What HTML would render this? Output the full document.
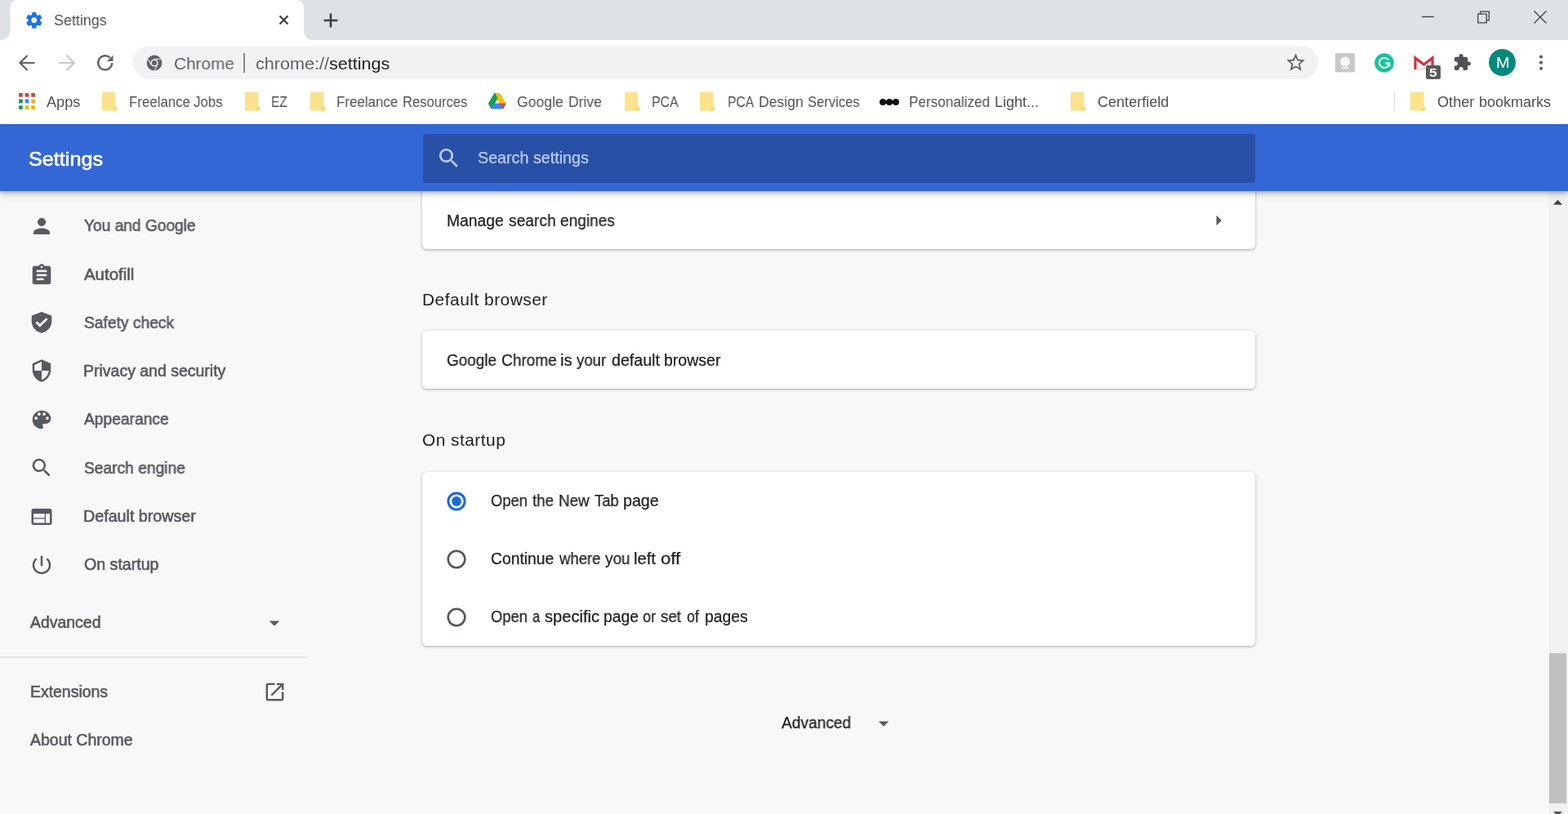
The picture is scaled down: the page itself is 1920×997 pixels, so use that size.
<!DOCTYPE html>
<html lang="en">
<head>
<meta charset="utf-8">
<title>Settings</title>
<style>
*{box-sizing:border-box;margin:0;padding:0}
html,body{width:1920px;height:997px;overflow:hidden;background:#f8f8f9}
body{font-family:"Liberation Sans",sans-serif;color:#202124;position:relative}
.abs,.t,.ic{position:absolute}
.t{white-space:nowrap;line-height:1;will-change:transform;transform-origin:0 0}
.ic{display:block;overflow:visible}
.card{background:#fff;border-radius:5.5px;box-shadow:0 1px 2.5px rgba(60,64,67,.24),0 1px 3.5px 1px rgba(60,64,67,.14)}
</style>
</head>
<body>
<!-- tab strip -->
<div class="abs" style="left:0px;top:0px;width:1920px;height:48.6px;background:#dee1e6"></div>
<svg class="ic" style="left:0px;top:0px;width:386px;height:49px" viewBox="0 0 386 49"><path d="M0 49 C7 49 12.500 44.500 12.500 37 V9 C12.500 3.500 16 0 21.500 0 H363 C368.500 0 372 3.500 372 9 V37 C372 44.500 376.500 49 384 49 Z" fill="#fff"/></svg>
<svg class="ic" style="left:29.90px;top:12.90px;width:23.6px;height:23.6px" viewBox="0 0 24 24"><path fill="#1a73e8" fill-rule="evenodd" d="M19.43 12.98c.04-.32.07-.64.07-.98s-.03-.66-.07-.98l2.11-1.65c.19-.15.24-.42.12-.64l-2-3.46c-.12-.22-.39-.3-.61-.22l-2.49 1c-.52-.4-1.08-.73-1.69-.98l-.38-2.65C14.46 2.18 14.25 2 14 2h-4c-.25 0-.46.18-.49.42l-.38 2.65c-.61.25-1.17.59-1.69.98l-2.49-1c-.23-.09-.49 0-.61.22l-2 3.46c-.13.22-.07.49.12.64l2.11 1.65c-.04.32-.07.65-.07.98s.03.66.07.98l-2.11 1.65c-.19.15-.24.42-.12.64l2 3.46c.12.22.39.3.61.22l2.49-1c.52.4 1.08.73 1.69.98l.38 2.65c.03.24.24.42.49.42h4c.25 0 .46-.18.49-.42l.38-2.65c.61-.25 1.17-.59 1.69-.98l2.49 1c.23.09.49 0 .61-.22l2-3.46c.12-.22.07-.49-.12-.64l-2.11-1.65zM12 15.5c-1.93 0-3.5-1.57-3.5-3.5s1.57-3.5 3.5-3.5 3.5 1.57 3.5 3.5-1.57 3.5-3.5 3.5z"/></svg>
<div class="t" style="left:65.55px;top:16px;font-size:18.4px;color:#4d5054;transform:scaleX(0.9734)">Settings</div>
<svg class="ic" style="left:341px;top:18px;width:13px;height:13px" viewBox="0 0 13 13"><path d="M1.500 1.500 L11.500 11.500 M11.500 1.500 L1.500 11.500" stroke="#3c4043" stroke-width="2.200" fill="none"/></svg>
<svg class="ic" style="left:395px;top:15px;width:20px;height:20px" viewBox="0 0 20 20"><path d="M10 1.500 V18.500 M1.500 10 H18.500" stroke="#3c4043" stroke-width="2.600" fill="none"/></svg>
<svg class="ic" style="left:1738px;top:10px;width:22px;height:22px" viewBox="0 0 22 22"><path d="M3 10.500 H18" stroke="#3c4043" stroke-width="1.300" fill="none"/></svg>
<svg class="ic" style="left:1806px;top:10px;width:22px;height:22px" viewBox="0 0 22 22"><path d="M3.700 7.200 H14.300 V17.800 H3.700 Z M6.700 7.200 V4.200 H17.300 V14.800 H14.300" stroke="#3c4043" stroke-width="1.250" fill="none"/></svg>
<svg class="ic" style="left:1874.5px;top:10px;width:22px;height:22px" viewBox="0 0 22 22"><path d="M3.500 3.500 L18.500 18.500 M18.500 3.500 L3.500 18.500" stroke="#3c4043" stroke-width="1.300" fill="none"/></svg>
<!-- toolbar -->
<div class="abs" style="left:0px;top:49px;width:1920px;height:103px;background:#fff"></div>
<svg class="ic" style="left:22.4px;top:64.5px;width:24px;height:24px" viewBox="0 0 24 24"><path d="M20.500 12 H3.500 M11.500 3 L2.500 12 L11.500 21" stroke="#5f6368" stroke-width="2.200" fill="none"/></svg>
<svg class="ic" style="left:69px;top:65px;width:24px;height:24px" viewBox="0 0 24 24"><path d="M3.500 12 H20.500 M12.500 2.800 L21.500 12 L12.500 21.200" stroke="#c4c7ca" stroke-width="2.200" fill="none"/></svg>
<svg class="ic" style="left:117px;top:65px;width:24px;height:24px" viewBox="0 0 24 24"><path d="M20.300 12 A8.600 8.600 0 1 1 17.600 5.600" stroke="#5f6368" stroke-width="2.300" fill="none"/><path d="M21.500 2.600 V10 H14.100 Z" fill="#5f6368"/></svg>
<div class="abs" style="left:163px;top:56px;width:1450.5px;height:41px;border-radius:21px;background:#f1f2f3"></div>
<svg class="ic" style="left:179px;top:67px;width:20px;height:20px" viewBox="0 0 20 20"><circle cx="10" cy="10" r="9.400" fill="#5f6368"/><circle cx="10" cy="10" r="4.600" fill="#f1f2f3"/><circle cx="10" cy="10" r="3.100" fill="#5f6368"/><path d="M10 5.400 H18.300 M6 12.300 L1.900 5.200 M14 12.300 L9.900 19.400" stroke="#f1f2f3" stroke-width="1.100" fill="none" opacity=".85"/></svg>
<div class="t" style="left:213.01px;top:67px;font-size:21px;color:#5f6368;transform:scaleX(0.9904)">Chrome</div>
<div class="abs" style="left:298.3px;top:64.5px;width:1.4px;height:24px;background:#85898e"></div>
<div class="t" style="left:313.04px;top:67px;font-size:21px;color:#5f6368;transform:scaleX(1.0282)">chrome://<span style="color:#202124">settings</span></div>
<svg class="ic" style="left:1573.40px;top:63.00px;width:27.2px;height:27.2px" viewBox="0 0 24 24"><path fill="#5f6368" fill-rule="evenodd" d="M22 9.24l-7.19-.62L12 2 9.19 8.63 2 9.24l5.46 4.73L5.82 21 12 17.27 18.18 21l-1.63-7.03L22 9.24zM12 15.4l-3.76 2.27 1-4.28-3.32-2.88 4.38-.38L12 6.1l1.71 4.04 4.38.38-3.32 2.88 1 4.28L12 15.4z"/></svg>
<!-- extensions -->
<svg class="ic" style="left:1635px;top:65px;width:24px;height:24px" viewBox="0 0 24 24"><rect width="24" height="23.500" rx="1.500" fill="#c8c8c8"/><circle cx="12" cy="10.500" r="6" fill="#f7f7f7"/><rect x="7.500" y="17" width="9" height="2.400" rx="1" fill="#efefef"/></svg>
<svg class="ic" style="left:1683px;top:65px;width:24px;height:24px" viewBox="0 0 24 24"><circle cx="12" cy="12" r="11.800" fill="#15c39a"/><path d="M17.200 8.600 A6.100 6.100 0 1 0 18.100 12.600 H13" stroke="#fff" stroke-width="2.100" fill="none"/><path d="M15.600 15.200 L19.300 12.400 L19.300 16.900 Z" fill="#fff"/></svg>
<svg class="ic" style="left:1730.5px;top:68px;width:25px;height:18px" viewBox="0 0 25 18"><path d="M2 17.200 V3 L12.500 11 L23 3 V17.200" stroke="#d3303d" stroke-width="3.200" fill="none" stroke-linejoin="miter"/><path d="M3 16.500 H22" stroke="#e3b9bb" stroke-width="1.200"/></svg>
<div class="abs" style="left:1746px;top:80px;width:18px;height:17px;border-radius:2px;background:#5b5b5b"></div>
<div class="t" style="left:1750.21px;top:81px;font-size:15px;color:#fff;transform:scaleX(1.1616);font-weight:700">5</div>
<svg class="ic" style="left:1780px;top:65.1px;width:22px;height:22px" viewBox="1 0 23 23"><path fill="#4f5256" d="M20.5 11H19V7c0-1.1-.9-2-2-2h-4V3.5C13 2.12 11.88 1 10.5 1S8 2.12 8 3.5V5H4c-1.1 0-1.99.9-1.99 2v3.8H3.5c1.49 0 2.7 1.21 2.7 2.7s-1.21 2.7-2.7 2.7H2V20c0 1.1.9 2 2 2h3.8v-1.5c0-1.49 1.21-2.7 2.7-2.7 1.49 0 2.7 1.21 2.7 2.7V22H17c1.1 0 2-.9 2-2v-4h1.5c1.38 0 2.5-1.12 2.5-2.5S21.88 11 20.5 11z"/></svg>
<div class="abs" style="left:1823px;top:60px;width:33px;height:33px;border-radius:50%;background:#00897b"></div>
<div class="t" style="left:1831.66px;top:69px;font-size:17.5px;color:#fff;transform:scaleX(1.1366)">M</div>
<svg class="ic" style="left:1881px;top:65px;width:12px;height:24px" viewBox="0 0 12 24"><circle cx="6" cy="4.600" r="2.100" fill="#5f6368"/><circle cx="6" cy="11.700" r="2.100" fill="#5f6368"/><circle cx="6" cy="18.800" r="2.100" fill="#5f6368"/></svg>
<!-- bookmarks bar -->
<svg class="ic" style="left:23px;top:114px;width:20px;height:20px" viewBox="0 0 20 20"><rect x="0.0" y="0.0" width="4.800" height="4.800" rx=".800" fill="#db4437"/><rect x="7.6" y="0.0" width="4.800" height="4.800" rx=".800" fill="#db4437"/><rect x="15.2" y="0.0" width="4.800" height="4.800" rx=".800" fill="#db4437"/><rect x="0.0" y="7.6" width="4.800" height="4.800" rx=".800" fill="#0f9d58"/><rect x="7.6" y="7.6" width="4.800" height="4.800" rx=".800" fill="#4285f4"/><rect x="15.2" y="7.6" width="4.800" height="4.800" rx=".800" fill="#f4b400"/><rect x="0.0" y="15.2" width="4.800" height="4.800" rx=".800" fill="#0f9d58"/><rect x="7.6" y="15.2" width="4.800" height="4.800" rx=".800" fill="#f4b400"/><rect x="15.2" y="15.2" width="4.800" height="4.800" rx=".800" fill="#f4b400"/></svg>
<div class="t" style="left:56.70px;top:116px;font-size:18px;color:#4d5054;transform:scaleX(1.0081)">Apps</div>
<svg class="ic" style="left:124.5px;top:113.3px;width:18.2px;height:22.5px" viewBox="0 0 18.200 22.500"><path d="M0 0 H16.400 V17.500 H18.200 V22.500 H0 Z" fill="#fbe28b"/><path d="M14.200 18.500 H18.200 V22.500 H14.200 Z" fill="#f5d872"/></svg>
<div class="t" style="left:157.86px;top:116px;font-size:18px;color:#4d5054;transform:scaleX(0.9366)">Freelance </div><div class="t" style="left:237.31px;top:116px;font-size:18px;color:#4d5054;transform:scaleX(0.9360)">Jobs</div>
<svg class="ic" style="left:300px;top:113.3px;width:18.2px;height:22.5px" viewBox="0 0 18.200 22.500"><path d="M0 0 H16.400 V17.500 H18.200 V22.500 H0 Z" fill="#fbe28b"/><path d="M14.200 18.500 H18.200 V22.500 H14.200 Z" fill="#f5d872"/></svg>
<div class="t" style="left:332.44px;top:116px;font-size:18px;color:#4d5054;transform:scaleX(0.8586)">EZ</div>
<svg class="ic" style="left:380px;top:113.3px;width:18.2px;height:22.5px" viewBox="0 0 18.200 22.500"><path d="M0 0 H16.400 V17.500 H18.200 V22.500 H0 Z" fill="#fbe28b"/><path d="M14.200 18.500 H18.200 V22.500 H14.200 Z" fill="#f5d872"/></svg>
<div class="t" style="left:412.46px;top:116px;font-size:18px;color:#4d5054;transform:scaleX(0.9404)">Freelance </div><div class="t" style="left:493.18px;top:116px;font-size:18px;color:#4d5054;transform:scaleX(0.9220)">Resources</div>
<svg class="ic" style="left:597.3px;top:113.3px;width:23.4px;height:21.5px" viewBox="0 0 24 22"><g stroke-linejoin="round" stroke-width="1.600"><path d="M8.800 1.800 H15.200 L22.300 14 H15.900 Z" fill="#fbbc04" stroke="#fbbc04"/><path d="M8.800 1.800 L12 7.400 L4.900 19.800 L1.700 14.200 Z" fill="#1a9c55" stroke="#1a9c55"/><path d="M8.600 14.600 H22.200 L19.200 20.200 H5.400 Z" fill="#3f82f0" stroke="#3f82f0"/><path d="M19.200 20.200 L22.200 14.600 H16.200 Z" fill="#d9453a" stroke="#d9453a" stroke-width=".600"/></g></svg>
<div class="t" style="left:632.99px;top:116px;font-size:18px;color:#4d5054;transform:scaleX(0.9782)">Google </div><div class="t" style="left:696.03px;top:116px;font-size:18px;color:#4d5054;transform:scaleX(0.9712)">Drive</div>
<svg class="ic" style="left:764.5px;top:113.3px;width:18.2px;height:22.5px" viewBox="0 0 18.200 22.500"><path d="M0 0 H16.400 V17.500 H18.200 V22.500 H0 Z" fill="#fbe28b"/><path d="M14.200 18.500 H18.200 V22.500 H14.200 Z" fill="#f5d872"/></svg>
<div class="t" style="left:798.12px;top:116px;font-size:18px;color:#4d5054;transform:scaleX(0.8806)">PCA</div>
<svg class="ic" style="left:857.3px;top:113.3px;width:18.2px;height:22.5px" viewBox="0 0 18.200 22.500"><path d="M0 0 H16.400 V17.500 H18.200 V22.500 H0 Z" fill="#fbe28b"/><path d="M14.200 18.500 H18.200 V22.500 H14.200 Z" fill="#f5d872"/></svg>
<div class="t" style="left:891.33px;top:116px;font-size:18px;color:#4d5054;transform:scaleX(0.8694)">PCA </div><div class="t" style="left:929.12px;top:116px;font-size:18px;color:#4d5054;transform:scaleX(0.9759)">Design </div><div class="t" style="left:988.81px;top:116px;font-size:18px;color:#4d5054;transform:scaleX(0.9212)">Services</div>
<svg class="ic" style="left:1076.3px;top:119.6px;width:26px;height:10px" viewBox="0 0 26 10"><circle cx="5" cy="5" r="4" fill="#111"/><circle cx="13" cy="5" r="4" fill="#111"/><circle cx="21" cy="5" r="4" fill="#111"/><rect x="5" y="3" width="16" height="4" fill="#111"/></svg>
<div class="t" style="left:1113.25px;top:116px;font-size:18px;color:#4d5054;transform:scaleX(0.9529)">Personalized </div><div class="t" style="left:1217.60px;top:116px;font-size:18px;color:#4d5054;transform:scaleX(0.9990)">Light...</div>
<svg class="ic" style="left:1310.7px;top:113.3px;width:18.2px;height:22.5px" viewBox="0 0 18.200 22.500"><path d="M0 0 H16.400 V17.500 H18.200 V22.500 H0 Z" fill="#fbe28b"/><path d="M14.200 18.500 H18.200 V22.500 H14.200 Z" fill="#f5d872"/></svg>
<div class="t" style="left:1344.05px;top:116px;font-size:18px;color:#4d5054;transform:scaleX(1.0029)">Centerfield</div>
<div class="abs" style="left:1707px;top:112px;width:1px;height:24px;background:#dadce0"></div>
<svg class="ic" style="left:1726.7px;top:113.3px;width:18.2px;height:22.5px" viewBox="0 0 18.200 22.500"><path d="M0 0 H16.400 V17.500 H18.200 V22.500 H0 Z" fill="#fbe28b"/><path d="M14.200 18.500 H18.200 V22.500 H14.200 Z" fill="#f5d872"/></svg>
<div class="t" style="left:1759.61px;top:116px;font-size:18px;color:#4d5054;transform:scaleX(1.0065)">Other </div><div class="t" style="left:1810.70px;top:116px;font-size:18px;color:#4d5054;transform:scaleX(0.9968)">bookmarks</div>
<!-- settings page -->
<div class="abs card" style="left:517px;top:225px;width:1020px;height:80px"></div>
<div class="abs card" style="left:517px;top:405px;width:1020px;height:71.300px"></div>
<div class="abs card" style="left:517px;top:577.600px;width:1020px;height:213.300px"></div>
<div class="abs" style="left:1896px;top:235px;width:24px;height:762px;background:#f1f1f1"></div>
<div class="abs" style="left:1897px;top:800px;width:21px;height:184px;background:#c1c1c1"></div>
<svg class="ic" style="left:1895.6px;top:236.4px;width:23px;height:23px" viewBox="0 0 23 23"><path d="M6 14.700 L11.500 8.700 L17 14.700 Z" fill="#404040"/></svg>
<svg class="ic" style="left:1895.6px;top:984.8px;width:23px;height:23px" viewBox="0 0 23 23"><path d="M6 9 L11.500 15 L17 9 Z" fill="#555"/></svg>
<div class="abs" style="left:0px;top:152px;width:1920px;height:82.2px;background:#3367d6;box-shadow:0 2px 5px rgba(0,0,0,.28),0 5px 9px rgba(0,0,0,.10)"></div>
<div class="abs" style="left:517.5px;top:164px;width:1019px;height:59.5px;border-radius:3px;background:#2850a7"></div>
<div class="t" style="left:35.45px;top:183px;font-size:24px;color:#fff;transform:scaleX(1.0492);-webkit-text-stroke:0.6px #fff">Settings</div>
<svg class="ic" style="left:533.95px;top:178.05px;width:31.5px;height:31.5px" viewBox="0 0 24 24"><path fill="#bccdf6" fill-rule="evenodd" d="M15.5 14h-.79l-.28-.27C15.41 12.59 16 11.11 16 9.5 16 5.91 13.09 3 9.5 3S3 5.91 3 9.5 5.91 16 9.5 16c1.61 0 3.09-.59 4.23-1.57l.27.28v.79l5 4.99L20.49 19l-4.99-5zm-6 0C7.01 14 5 11.99 5 9.5S7.01 5 9.5 5 14 7.01 14 9.5 11.99 14 9.5 14z"/></svg>
<div class="t" style="left:584.77px;top:184px;font-size:19.3px;color:#bccdf6;transform:scaleX(1.0219);-webkit-text-stroke:0.25px #bccdf6">Search settings</div>
<svg class="ic" style="left:35.90px;top:262.00px;width:30px;height:30px" viewBox="0 0 24 24"><path fill="#575a5f" fill-rule="evenodd" d="M12 12c2.21 0 4-1.79 4-4s-1.79-4-4-4-4 1.79-4 4 1.79 4 4 4zm0 2c-2.67 0-8 1.34-8 4v2h16v-2c0-2.66-5.33-4-8-4z"/></svg><div class="t" style="left:103.20px;top:267px;font-size:19.3px;color:#575a5f;transform:scaleX(0.9927);-webkit-text-stroke:0.6px #575a5f">You and Google</div>
<svg class="ic" style="left:35.90px;top:321.60px;width:30px;height:30px" viewBox="0 0 24 24"><path fill="#575a5f" fill-rule="evenodd" d="M19 3h-4.18C14.4 1.84 13.3 1 12 1c-1.3 0-2.4.84-2.82 2H5c-1.1 0-2 .9-2 2v14c0 1.1.9 2 2 2h14c1.1 0 2-.9 2-2V5c0-1.1-.9-2-2-2zm-7 0c.55 0 1 .45 1 1s-.45 1-1 1-1-.45-1-1 .45-1 1-1zm2 14H7v-2h7v2zm3-4H7v-2h10v2zm0-4H7V7h10v2z"/></svg><div class="t" style="left:103.32px;top:327px;font-size:19.3px;color:#575a5f;transform:scaleX(1.0592);-webkit-text-stroke:0.6px #575a5f">Autofill</div>
<svg class="ic" style="left:35.90px;top:380.20px;width:30px;height:30px" viewBox="0 0 24 24"><path fill="#575a5f" fill-rule="evenodd" d="M12 1.500 L21.800 5.300 V11 C21.800 16.400 17.800 21 12 22.300 C6.200 21 2.200 16.400 2.200 11 V5.300 Z M10.300 16.600 L6 12.300 L7.600 10.700 L10.300 13.400 L16.400 7.300 L18 8.900 Z"/></svg><div class="t" style="left:102.50px;top:386px;font-size:19.3px;color:#575a5f;transform:scaleX(0.9964);-webkit-text-stroke:0.6px #575a5f">Safety check</div>
<svg class="ic" style="left:35.90px;top:439.20px;width:30px;height:30px" viewBox="0 0 24 24"><path fill="#575a5f" fill-rule="evenodd" d="M12 1L3 5v6c0 5.55 3.84 10.74 9 12 5.16-1.26 9-6.45 9-12V5l-9-4zm0 10.99h7c-.53 4.12-3.28 7.79-7 8.94V12H5V6.3l7-3.11v8.8z"/></svg><div class="t" style="left:102.19px;top:445px;font-size:19.3px;color:#575a5f;transform:scaleX(1.0105);-webkit-text-stroke:0.6px #575a5f">Privacy and security</div>
<svg class="ic" style="left:35.90px;top:499.00px;width:30px;height:30px" viewBox="0 0 24 24"><path fill="#575a5f" fill-rule="evenodd" d="M12 3c-4.97 0-9 4.03-9 9s4.03 9 9 9c.83 0 1.5-.67 1.5-1.5 0-.39-.15-.74-.39-1.01-.23-.26-.38-.61-.38-.99 0-.83.67-1.5 1.5-1.5H16c2.76 0 5-2.24 5-5 0-4.42-4.03-8-9-8zm-5.5 9c-.83 0-1.5-.67-1.5-1.5S5.67 9 6.5 9 8 9.67 8 10.5 7.33 12 6.5 12zm3-4C8.67 8 8 7.33 8 6.5S8.67 5 9.5 5s1.5.67 1.5 1.5S10.33 8 9.5 8zm5 0c-.83 0-1.5-.67-1.5-1.5S13.67 5 14.5 5s1.5.67 1.5 1.5S15.33 8 14.5 8zm3 4c-.83 0-1.5-.67-1.5-1.5S16.67 9 17.5 9s1.5.67 1.5 1.5-.67 1.5-1.5 1.5z"/></svg><div class="t" style="left:103.32px;top:504px;font-size:19.3px;color:#575a5f;transform:scaleX(0.9965);-webkit-text-stroke:0.6px #575a5f">Appearance</div>
<svg class="ic" style="left:35.90px;top:558.20px;width:30px;height:30px" viewBox="0 0 24 24"><path fill="#575a5f" fill-rule="evenodd" d="M15.5 14h-.79l-.28-.27C15.41 12.59 16 11.11 16 9.5 16 5.91 13.09 3 9.5 3S3 5.91 3 9.5 5.91 16 9.5 16c1.61 0 3.09-.59 4.23-1.57l.27.28v.79l5 4.99L20.49 19l-4.99-5zm-6 0C7.01 14 5 11.99 5 9.5S7.01 5 9.5 5 14 7.01 14 9.5 11.99 14 9.5 14z"/></svg><div class="t" style="left:102.50px;top:564px;font-size:19.3px;color:#575a5f;transform:scaleX(0.9952);-webkit-text-stroke:0.6px #575a5f">Search engine</div>
<svg class="ic" style="left:35.90px;top:617.50px;width:30px;height:30px" viewBox="0 0 24 24"><path fill="#575a5f" fill-rule="evenodd" d="M20 4H4c-1.1 0-1.99.9-1.99 2L2 18c0 1.1.9 2 2 2h16c1.1 0 2-.9 2-2V6c0-1.1-.9-2-2-2zm-5 14H4v-4h11v4zm0-5H4V9h11v4zm5 5h-4V9h4v9z"/></svg><div class="t" style="left:102.18px;top:623px;font-size:19.3px;color:#575a5f;transform:scaleX(1.0209);-webkit-text-stroke:0.6px #575a5f">Default browser</div>
<svg class="ic" style="left:35.90px;top:676.60px;width:30px;height:30px" viewBox="0 0 24 24"><path fill="#575a5f" fill-rule="evenodd" d="M13 3h-2v10h2V3zm4.83 2.17l-1.42 1.42C17.99 7.86 19 9.81 19 12c0 3.87-3.13 7-7 7s-7-3.13-7-7c0-2.19 1.01-4.14 2.58-5.42L6.17 5.17C4.23 6.82 3 9.26 3 12c0 4.97 4.03 9 9 9s9-4.03 9-9c0-2.74-1.23-5.18-3.17-6.83z"/></svg><div class="t" style="left:102.55px;top:682px;font-size:19.3px;color:#575a5f;transform:scaleX(1.0164);-webkit-text-stroke:0.6px #575a5f">On startup</div>
<div class="t" style="left:36.50px;top:753px;font-size:19.3px;color:#575a5f;transform:scaleX(1.0082);-webkit-text-stroke:0.6px #575a5f">Advanced</div>
<svg class="ic" style="left:321.40px;top:747.50px;width:30px;height:30px" viewBox="0 0 24 24"><path fill="#575a5f" fill-rule="evenodd" d="M7 10l5 5 5-5z"/></svg>
<div class="abs" style="left:0px;top:804.3px;width:376px;height:1.7px;background:#e2e3e5"></div>
<div class="t" style="left:36.50px;top:838px;font-size:19.3px;color:#575a5f;transform:scaleX(1.0074);-webkit-text-stroke:0.6px #575a5f">Extensions</div>
<svg class="ic" style="left:321.50px;top:833.00px;width:29px;height:29px" viewBox="0 0 24 24"><path fill="#575a5f" fill-rule="evenodd" d="M19 19H5V5h7V3H5c-1.11 0-2 .9-2 2v14c0 1.1.89 2 2 2h14c1.1 0 2-.9 2-2v-7h-2v7zM14 3v2h3.59l-9.83 9.83 1.41 1.41L19 6.41V10h2V3h-7z"/></svg>
<div class="t" style="left:36.50px;top:897px;font-size:19.3px;color:#575a5f;transform:scaleX(1.0105);-webkit-text-stroke:0.6px #575a5f">About Chrome</div>
<div class="t" style="left:547.20px;top:261px;font-size:19.3px;color:#202124;transform:scaleX(1.0000);-webkit-text-stroke:0.25px #202124">Manage </div><div class="t" style="left:622.66px;top:261px;font-size:19.3px;color:#202124;transform:scaleX(0.9954);-webkit-text-stroke:0.25px #202124">search </div><div class="t" style="left:685.96px;top:261px;font-size:19.3px;color:#202124;transform:scaleX(0.9884);-webkit-text-stroke:0.25px #202124">engines</div>
<svg class="ic" style="left:1476.70px;top:254.50px;width:30px;height:30px" viewBox="0 0 24 24"><path fill="#575a5f" fill-rule="evenodd" d="M10 17l5-5-5-5v10z"/></svg>
<div class="t" style="left:517.40px;top:357px;font-size:20.6px;color:#202124;transform:scaleX(1.0139);letter-spacing:0.5px">Default browser</div>
<div class="t" style="left:547.02px;top:432px;font-size:19.3px;color:#202124;transform:scaleX(0.9791);-webkit-text-stroke:0.25px #202124">Google </div><div class="t" style="left:613.50px;top:432px;font-size:19.3px;color:#202124;transform:scaleX(0.9882);-webkit-text-stroke:0.25px #202124">Chrome </div><div class="t" style="left:686.45px;top:432px;font-size:19.3px;color:#202124;transform:scaleX(1.0456);-webkit-text-stroke:0.25px #202124">is </div><div class="t" style="left:706.22px;top:432px;font-size:19.3px;color:#202124;transform:scaleX(0.9649);-webkit-text-stroke:0.25px #202124">your </div><div class="t" style="left:748.76px;top:432px;font-size:19.3px;color:#202124;transform:scaleX(1.0180);-webkit-text-stroke:0.25px #202124">default </div><div class="t" style="left:813.39px;top:432px;font-size:19.3px;color:#202124;transform:scaleX(1.0132);-webkit-text-stroke:0.25px #202124">browser</div>
<div class="t" style="left:517.40px;top:529px;font-size:20.6px;color:#202124;transform:scaleX(1.0110);letter-spacing:0.5px">On startup</div>
<svg class="ic" style="left:547px;top:601.9px;width:24px;height:24px" viewBox="0 0 24 24"><circle cx="12" cy="12" r="10.10" fill="none" stroke="#1c6adb" stroke-width="3"/><circle cx="12" cy="12" r="5.900" fill="#1c6adb"/></svg><div class="t" style="left:601.15px;top:604px;font-size:19.3px;color:#202124;transform:scaleX(0.9514);-webkit-text-stroke:0.25px #202124">Open </div><div class="t" style="left:652.20px;top:604px;font-size:19.3px;color:#202124;transform:scaleX(0.9731);-webkit-text-stroke:0.25px #202124">the </div><div class="t" style="left:683.63px;top:604px;font-size:19.3px;color:#202124;transform:scaleX(0.9711);-webkit-text-stroke:0.25px #202124">New </div><div class="t" style="left:728.10px;top:604px;font-size:19.3px;color:#202124;transform:scaleX(0.9557);-webkit-text-stroke:0.25px #202124">Tab </div><div class="t" style="left:763.28px;top:604px;font-size:19.3px;color:#202124;transform:scaleX(1.0197);-webkit-text-stroke:0.25px #202124">page</div>
<svg class="ic" style="left:547px;top:672.9px;width:24px;height:24px" viewBox="0 0 24 24"><circle cx="12" cy="12" r="10.30" fill="none" stroke="#55585c" stroke-width="2.6"/></svg><div class="t" style="left:600.99px;top:675px;font-size:19.3px;color:#202124;transform:scaleX(1.0006);-webkit-text-stroke:0.25px #202124">Continue </div><div class="t" style="left:684.66px;top:675px;font-size:19.3px;color:#202124;transform:scaleX(0.9603);-webkit-text-stroke:0.25px #202124">where </div><div class="t" style="left:741.22px;top:675px;font-size:19.3px;color:#202124;transform:scaleX(0.9794);-webkit-text-stroke:0.25px #202124">you </div><div class="t" style="left:776.36px;top:675px;font-size:19.3px;color:#202124;transform:scaleX(1.0440);-webkit-text-stroke:0.25px #202124">left </div><div class="t" style="left:809.37px;top:675px;font-size:19.3px;color:#202124;transform:scaleX(1.1488);-webkit-text-stroke:0.25px #202124">off</div>
<svg class="ic" style="left:547px;top:743.9px;width:24px;height:24px" viewBox="0 0 24 24"><circle cx="12" cy="12" r="10.30" fill="none" stroke="#55585c" stroke-width="2.6"/></svg><div class="t" style="left:601.15px;top:746px;font-size:19.3px;color:#202124;transform:scaleX(0.9514);-webkit-text-stroke:0.25px #202124">Open </div><div class="t" style="left:651.64px;top:746px;font-size:19.3px;color:#202124;transform:scaleX(0.8510);-webkit-text-stroke:0.25px #202124">a </div><div class="t" style="left:667.04px;top:746px;font-size:19.3px;color:#202124;transform:scaleX(1.0416);-webkit-text-stroke:0.25px #202124">specific </div><div class="t" style="left:738.90px;top:746px;font-size:19.3px;color:#202124;transform:scaleX(0.9979);-webkit-text-stroke:0.25px #202124">page </div><div class="t" style="left:786.60px;top:746px;font-size:19.3px;color:#202124;transform:scaleX(0.9352);-webkit-text-stroke:0.25px #202124">or </div><div class="t" style="left:809.17px;top:746px;font-size:19.3px;color:#202124;transform:scaleX(0.9702);-webkit-text-stroke:0.25px #202124">set </div><div class="t" style="left:841.01px;top:746px;font-size:19.3px;color:#202124;transform:scaleX(0.9162);-webkit-text-stroke:0.25px #202124">of </div><div class="t" style="left:863.40px;top:746px;font-size:19.3px;color:#202124;transform:scaleX(0.9978);-webkit-text-stroke:0.25px #202124">pages</div>
<div class="t" style="left:957.43px;top:876px;font-size:19.3px;color:#202124;transform:scaleX(0.9926);-webkit-text-stroke:0.25px #202124">Advanced</div>
<svg class="ic" style="left:1066.80px;top:871.40px;width:30px;height:30px" viewBox="0 0 24 24"><path fill="#575a5f" fill-rule="evenodd" d="M7 10l5 5 5-5z"/></svg>
</body>
</html>
